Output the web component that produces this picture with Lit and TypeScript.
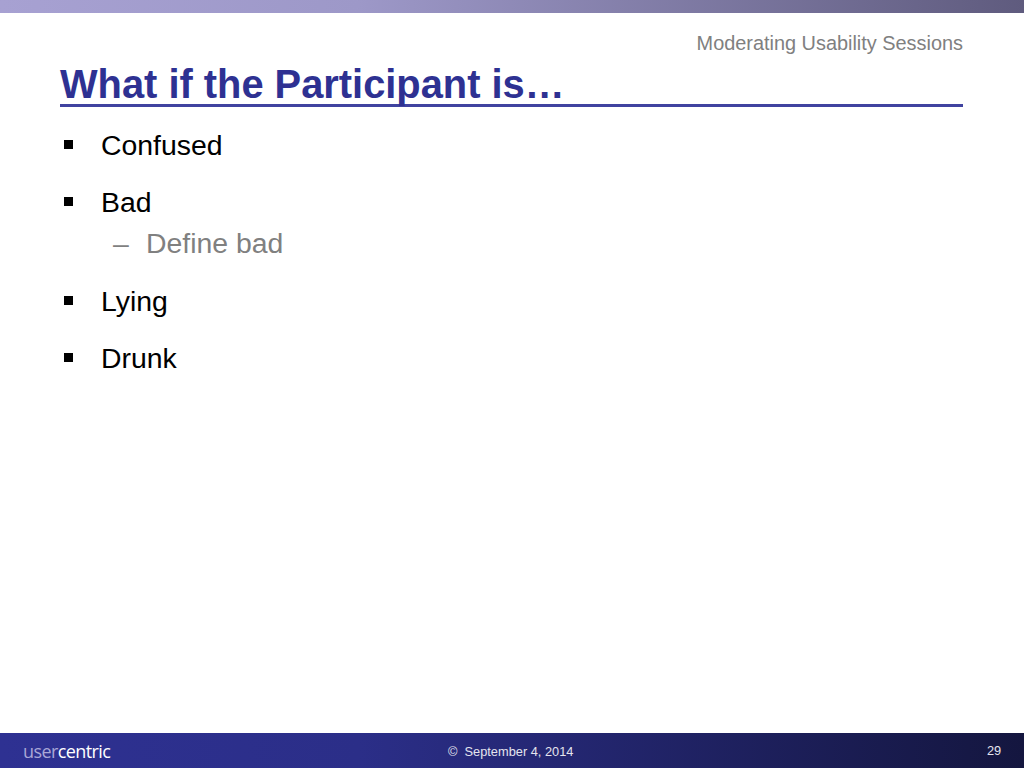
import { LitElement, html, css } from "lit";
import { customElement } from "lit/decorators.js";

@customElement("app-root")
export class AppRoot extends LitElement {
  static styles = css`
    :host {
      display: block;
      width: 1024px;
      height: 768px;
      background: #fff;
      font-family: "Liberation Sans", Arial, sans-serif;
      overflow: hidden;
    }
    .slide { display: flex; flex-direction: column; width: 1024px; height: 768px; }
    .topbar { height: 13px; background: linear-gradient(90deg, #a7a1d2 0%, #9d98c8 35%, #5f5b7e 100%); flex: none; }
    .content { flex: 1; display: flex; flex-direction: column; padding: 0 61px 0 60px; }
    .section { text-align: right; font-size: 19.9px; line-height: 24px; color: #808080; padding-top: 18px; height: 24px; }
    .title {
      font-size: 39.85px; font-weight: bold; color: #2e3192; line-height: 42px;
      padding-top: 8px; height: 41px;
      border-bottom: 3px solid #4043a0; white-space: nowrap;
    }
    ul { list-style: none; margin: 0; padding: 22px 0 0 0; }
    li.l1 { display: flex; font-size: 28.4px; line-height: 32px; color: #000; margin-bottom: 25.3px; height: 32px; }
    li.l1.tight { margin-bottom: 9px; }
    .bullet { width: 41px; flex: none; display: flex; padding-top: 11px; padding-left: 4px; box-sizing: border-box; }
    .bullet i { display: block; width: 9px; height: 9px; background: #000; }
    li.l2 { display: flex; font-size: 28.4px; line-height: 32px; color: #808080; margin-bottom: 25.3px; height: 32px; padding-left: 53px; }
    .dash { width: 33px; flex: none; }
    .footer {
      flex: none; height: 35px; display: grid; grid-template-columns: 1fr; position: relative;
      background: linear-gradient(90deg, #2e3192 0%, #2b2e88 35%, #14163f 100%);
      color: #fff; align-items: center;
    }
    .logo { position: absolute; left: 23px; top: 5px; font-family: "Open Sans", sans-serif; font-size: 18px; line-height: 26px; letter-spacing: -0.6px; color: #a9a7d6; }
    .logo b { font-weight: 400; color: #fff; }
    .date { position: absolute; left: 448px; top: 11px; font-size: 12.8px; line-height: 16px; color: #e4e4ee; white-space: pre; }
    .num { position: absolute; left: 987px; top: 10px; font-size: 12.8px; line-height: 16px; color: #e4e4ee; }
  `;

  render() {
    return html`
      <div class="slide">
        <div class="topbar"></div>
        <div class="content">
          <div class="section">Moderating Usability Sessions</div>
          <div class="title">What if the Participant is…</div>
          <ul>
            <li class="l1"><span class="bullet"><i></i></span>Confused</li>
            <li class="l1 tight"><span class="bullet"><i></i></span>Bad</li>
            <li class="l2"><span class="dash">–</span>Define bad</li>
            <li class="l1"><span class="bullet"><i></i></span>Lying</li>
            <li class="l1"><span class="bullet"><i></i></span>Drunk</li>
          </ul>
        </div>
        <div class="footer">
          <div class="logo">user<b>centric</b></div>
          <div class="date">©  September 4, 2014</div>
          <div class="num">29</div>
        </div>
      </div>
    `;
  }
}
